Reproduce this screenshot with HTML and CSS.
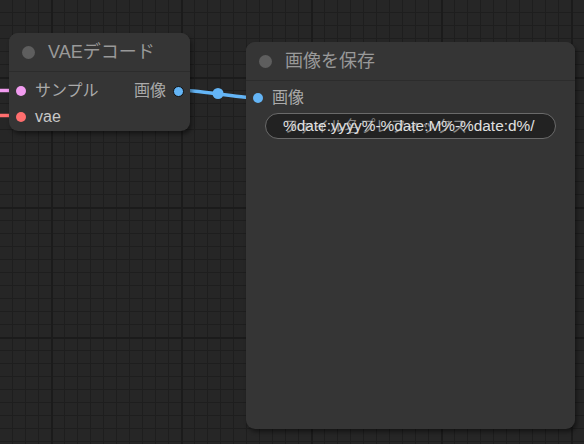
FILE: index.html
```html
<!DOCTYPE html>
<html lang="ja">
<head>
<meta charset="utf-8">
<title>ComfyUI</title>
<link rel="stylesheet" href="styles.css">
</head>
<body>
<div class="canvas">
  <svg class="links" width="584" height="444" viewBox="0 0 584 444">
    <path d="M0 90.5 L12 90.5" stroke="#f29cf0" stroke-width="3.5" fill="none"/>
    <path d="M0 115.5 L12 115.5" stroke="#ff6e6e" stroke-width="3.5" fill="none"/>
    <path d="M178 90 C198 90 238 98 258 98" stroke="#64b5f6" stroke-width="3.5" fill="none"/>
    <circle cx="218" cy="93.5" r="5.5" fill="#64b5f6"/>
  </svg>

  <div class="node node-vae">
    <div class="node-title"><span class="title-dot"></span><span class="title-text">VAEデコード</span></div>
    <div class="node-body slots">
      <div class="slot-col">
        <div class="slot"><span class="dot dot-latent"></span><span class="slot-label">サンプル</span></div>
        <div class="slot"><span class="dot dot-vae"></span><span class="slot-label light">vae</span></div>
      </div>
      <div class="slot-col out">
        <div class="slot"><span class="slot-label">画像</span><span class="dot dot-image out-dot"></span></div>
      </div>
    </div>
  </div>

  <div class="node node-save">
    <div class="node-title"><span class="title-dot"></span><span class="title-text">画像を保存</span></div>
    <div class="node-body">
      <div class="slot in-save"><span class="dot dot-image"></span><span class="slot-label">画像</span></div>
      <div class="widget">
        <span class="widget-label">ファイル名プレフィックス</span>
        <span class="widget-value">%date:yyyy%-%date:M%-%date:d%/</span>
      </div>
    </div>
  </div>
</div>
</body>
</html>
```

FILE: styles.css
```css
* { box-sizing: border-box; }
html, body {
  margin: 0;
  padding: 0;
  width: 584px;
  height: 444px;
  overflow: hidden;
  background: #232323;
  font-family: "Liberation Sans", Arial, "Noto Sans CJK JP", sans-serif;
}
.canvas {
  position: relative;
  width: 584px;
  height: 444px;
  background-color: #262626;
  background-image:
    linear-gradient(to right, #1b1b1b 2px, transparent 2px),
    linear-gradient(to bottom, #1b1b1b 2px, transparent 2px),
    linear-gradient(to right, #1e1e1e 1.5px, transparent 1.5px),
    linear-gradient(to bottom, #1e1e1e 1.5px, transparent 1.5px);
  background-size: 130px 130px, 130px 130px, 13px 13px, 13px 13px;
  background-position: 51px 0, 0 77px, 12px 0, 0 12px;
}
.links {
  position: absolute;
  left: 0;
  top: 0;
}
.node {
  position: absolute;
  background: #353535;
  border-radius: 9px;
  box-shadow: 2px 3px 4px rgba(0,0,0,0.45);
  color: #aaa;
}
.node-vae { left: 9px; top: 33px; width: 181px; height: 98px; }
.node-save { left: 246px; top: 42px; width: 329px; height: 387px; }
.node-title {
  height: 39px;
  display: flex;
  align-items: center;
  border-bottom: 1px solid #2c2c2c;
  background: #353535;
  border-radius: 9px 9px 0 0;
}
.title-dot {
  width: 13px;
  height: 13px;
  border-radius: 50%;
  background: #5e5e5e;
  margin-left: 13px;
  margin-right: 13px;
}
.title-text {
  font-size: 18px;
  color: #999;
  line-height: 1;
}
.node-body { padding-top: 4px; }
.node-vae .node-body { padding-top: 6px; }
.slots {
  display: flex;
  justify-content: space-between;
}
.slot {
  height: 26px;
  display: flex;
  align-items: center;
}
.slot-col:first-child .slot { padding-left: 7px; }
.slot-col.out .slot { padding-right: 6px; }
.dot {
  width: 10px;
  height: 10px;
  border-radius: 50%;
  display: inline-block;
}
.dot-latent { background: #f29cf0; }
.dot-vae { background: #ff6e6e; }
.dot-image { background: #64b5f6; }
.out-dot { border: 1px solid #111; width: 11px; height: 11px; }
.slot-label {
  font-size: 16px;
  color: #aaa;
  margin-left: 6px;
  line-height: 1;
}
.slot-col.out .slot-label { margin-left: 0; margin-right: 7px; }
.slot-label.light { color: #c8c8c8; margin-left: 8px; }
.slot-col:first-child .slot .slot-label { margin-left: 9px; }
.in-save { padding-left: 7px; }
.in-save .slot-label { margin-left: 9px; }
.widget {
  position: relative;
  margin: 2px 19px 0 19px;
  height: 26px;
  border: 1px solid #6a6a6a;
  border-radius: 13px;
  background: #222;
  display: flex;
  align-items: center;
  padding-left: 17px;
  font-size: 15.4px;
  line-height: 1;
}
.widget-label {
  position: absolute;
  left: 17px;
  top: 5px;
  color: #8a8a8a;
  white-space: nowrap;
  font-size: 15.4px;
}
.widget-value {
  position: relative;
  color: #e0e0e0;
  white-space: nowrap;
}
```
